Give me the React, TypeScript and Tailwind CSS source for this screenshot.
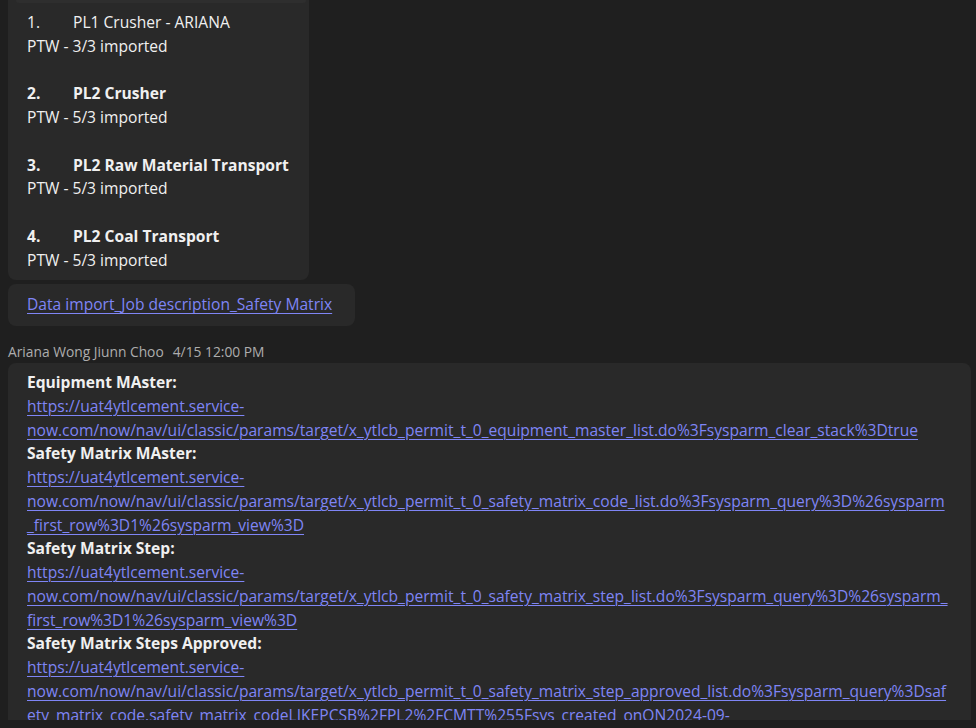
const linkCls = "text-[#7f85f5] underline underline-offset-[3px] decoration-1 whitespace-nowrap block";

const items = [
  { n: "1.", title: "PL1 Crusher - ARIANA", bold: false, sub: "PTW - 3/3 imported" },
  { n: "2.", title: "PL2 Crusher", bold: true, sub: "PTW - 5/3 imported" },
  { n: "3.", title: "PL2 Raw Material Transport", bold: true, sub: "PTW - 5/3 imported" },
  { n: "4.", title: "PL2 Coal Transport", bold: true, sub: "PTW - 5/3 imported" },
];

const host = "https://uat4ytlcement.service-";

const links = [
  {
    label: "Equipment MAster:",
    lines: [
      host,
      "now.com/now/nav/ui/classic/params/target/x_ytlcb_permit_t_0_equipment_master_list.do%3Fsysparm_clear_stack%3Dtrue",
    ],
  },
  {
    label: "Safety Matrix MAster:",
    lines: [
      host,
      "now.com/now/nav/ui/classic/params/target/x_ytlcb_permit_t_0_safety_matrix_code_list.do%3Fsysparm_query%3D%26sysparm",
      "_first_row%3D1%26sysparm_view%3D",
    ],
  },
  {
    label: "Safety Matrix Step:",
    lines: [
      host,
      "now.com/now/nav/ui/classic/params/target/x_ytlcb_permit_t_0_safety_matrix_step_list.do%3Fsysparm_query%3D%26sysparm_",
      "first_row%3D1%26sysparm_view%3D",
    ],
  },
  {
    label: "Safety Matrix Steps Approved:",
    lines: [
      host,
      "now.com/now/nav/ui/classic/params/target/x_ytlcb_permit_t_0_safety_matrix_step_approved_list.do%3Fsysparm_query%3Dsaf",
      "ety_matrix_code.safety_matrix_codeLIKEPCSB%2FPL2%2FCMTT%255Fsys_created_onON2024-09-",
    ],
  },
];

export default function App() {
  return (
    <div
      className="w-[976px] h-[728px] bg-[#1f1f1f] text-[#f0f0f0] overflow-hidden"
      style={{ fontFamily: '"Open Sans", "Noto Sans", sans-serif' }}
    >
      <div className="h-[720px] overflow-hidden pl-[8px] pr-[5px] text-[15.6px] leading-[23.75px]">
        {/* list bubble, top cut off by scroll */}
        <div className="w-[301px] bg-[#292929] rounded-b-lg pb-[8px]">
          <div className="h-[3px] ml-[8px] mr-[3px] bg-[#2e2e2e] rounded-b-md" />
          <div className="pl-[19px] pr-3 pt-[8px]">
            {items.map((it, i) => (
              <div key={it.n}>
                {i > 0 && <div className="h-[23.75px]" />}
                <div className={`flex ${it.bold ? "font-bold" : ""}`}>
                  <span className="w-[46px]">{it.n}</span>
                  <span>{it.title}</span>
                </div>
                <div>{it.sub}</div>
              </div>
            ))}
          </div>
        </div>

        <div className="mt-[4px] w-[347px] bg-[#292929] rounded-lg pl-[19px] py-[9px]">
          <span className={linkCls}>Data import_Job description_Safety Matrix</span>
        </div>

        <div className="mt-[17px] text-[13.8px] leading-[18px] text-[#adadad]">
          Ariana Wong Jiunn Choo<span className="ml-[9px]">4/15 12:00 PM</span>
        </div>

        <div className="mt-[2px] bg-[#292929] rounded-t-lg pl-[19px] pr-4 pt-[8px] pb-4 overflow-hidden">
          {links.map((l) => (
            <div key={l.label}>
              <div className="font-bold">{l.label}</div>
              {l.lines.map((ln, j) => (
                <span key={j} className={linkCls}>
                  {ln}
                </span>
              ))}
            </div>
          ))}
        </div>
      </div>
    </div>
  );
}
